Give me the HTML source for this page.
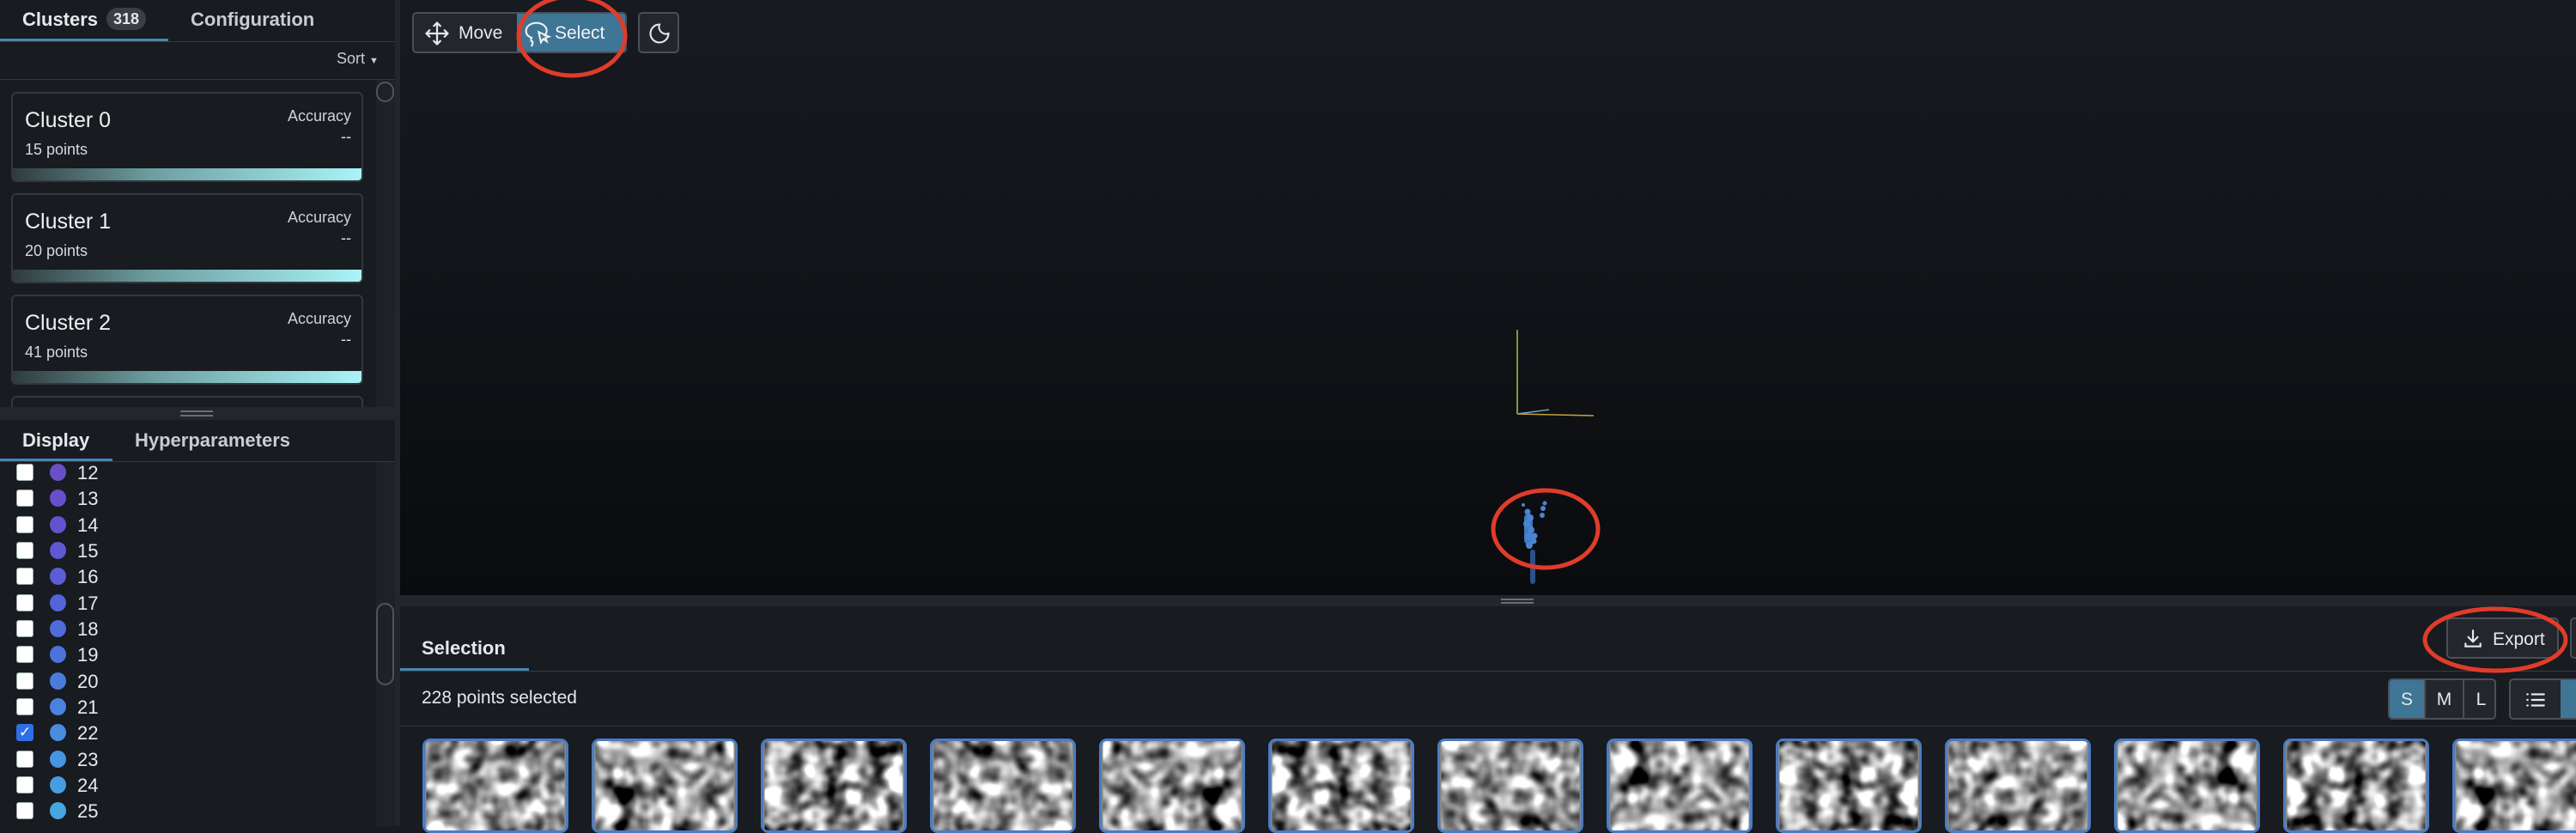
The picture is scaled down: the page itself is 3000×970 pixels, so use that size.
<!DOCTYPE html>
<html><head><meta charset="utf-8"><style>
*{box-sizing:border-box;margin:0;padding:0}
body{width:3000px;height:962px;overflow:hidden;background:#181b20;font-family:"Liberation Sans",sans-serif;color:#e6e8eb;position:relative}
.abs{position:absolute}
.left{left:0;top:0;width:462px;height:962px;background:#181b20}
.tab{position:absolute;font-weight:bold;font-size:22px}
.card{position:absolute;left:13px;width:410px;height:105px;border:2px solid #33373e;border-radius:6px;background:#181b20;overflow:hidden}
.card .t{position:absolute;left:14px;top:17px;font-size:25px;color:#eef0f2}
.card .p{position:absolute;left:14px;top:55px;font-size:18px;color:#d6d9dd}
.card .a{position:absolute;right:12px;top:16px;font-size:18px;color:#cfd3d8}
.card .d{position:absolute;right:12px;top:40px;font-size:18px;color:#dfe2e6}
.card .bar{position:absolute;left:0;right:0;bottom:0;height:14px;background:linear-gradient(90deg,#2f3b3e,#6d9ea0 40%,#a9f4f7)}
.row{position:absolute;left:19px;height:30px;width:200px}
.cb{position:absolute;left:0;top:0;width:20px;height:20px;background:#fff;border-radius:3px;border:1px solid #9aa}
.dot{position:absolute;left:39px;top:0;width:19px;height:20px;border-radius:50%}
.num{position:absolute;left:71px;top:-2px;font-size:22px;color:#e8eaed}
.thumb{position:absolute;top:860px;width:170px;height:110px;border:3px solid #4a7cc4;border-radius:9px;overflow:hidden;background:#888}
.btn{position:absolute;border:2px solid #4a4f58;border-radius:5px;background:#23262c}
</style></head><body>
<svg width="0" height="0" style="position:absolute">
<defs>
<filter id="f1" x="0" y="0" width="100%" height="100%" color-interpolation-filters="sRGB"><feTurbulence type="fractalNoise" baseFrequency="0.04" numOctaves="2" seed="1"/><feColorMatrix type="matrix" values="0.33 0.33 0.33 0 0 0.33 0.33 0.33 0 0 0.33 0.33 0.33 0 0 0 0 0 0 1"/><feComponentTransfer><feFuncR type="linear" slope="4" intercept="-1.4"/><feFuncG type="linear" slope="4" intercept="-1.4"/><feFuncB type="linear" slope="4" intercept="-1.4"/></feComponentTransfer></filter>
<filter id="f2" x="0" y="0" width="100%" height="100%" color-interpolation-filters="sRGB"><feTurbulence type="fractalNoise" baseFrequency="0.04" numOctaves="2" seed="7"/><feColorMatrix type="matrix" values="0.33 0.33 0.33 0 0 0.33 0.33 0.33 0 0 0.33 0.33 0.33 0 0 0 0 0 0 1"/><feComponentTransfer><feFuncR type="linear" slope="4" intercept="-1.4"/><feFuncG type="linear" slope="4" intercept="-1.4"/><feFuncB type="linear" slope="4" intercept="-1.4"/></feComponentTransfer></filter>
<filter id="f3" x="0" y="0" width="100%" height="100%" color-interpolation-filters="sRGB"><feTurbulence type="fractalNoise" baseFrequency="0.04" numOctaves="2" seed="13"/><feColorMatrix type="matrix" values="0.33 0.33 0.33 0 0 0.33 0.33 0.33 0 0 0.33 0.33 0.33 0 0 0 0 0 0 1"/><feComponentTransfer><feFuncR type="linear" slope="4" intercept="-1.4"/><feFuncG type="linear" slope="4" intercept="-1.4"/><feFuncB type="linear" slope="4" intercept="-1.4"/></feComponentTransfer></filter>
</defs></svg>

<!-- LEFT PANEL -->
<div class="abs left">
  <div class="tab" style="left:26px;top:10px">Clusters</div>
  <div class="abs" style="left:124px;top:9px;width:46px;height:26px;border-radius:13px;background:#3a3e45;font-size:18px;font-weight:bold;text-align:center;line-height:26px">318</div>
  <div class="tab" style="left:222px;top:10px;color:#c9ccd1">Configuration</div>
  <div class="abs" style="left:0;top:45px;width:196px;height:3px;background:#4a86b0"></div>
  <div class="abs" style="left:0;top:48px;width:460px;height:1px;background:#33373e"></div>
  <div class="abs" style="left:392px;top:58px;font-size:18px;color:#c9ccd1">Sort <span style="font-size:11px">▼</span></div>
  <div class="abs" style="left:0;top:92px;width:460px;height:1px;background:#33373e"></div>
  <div class="abs" style="left:438px;top:93px;width:22px;height:385px;background:#1e2126"></div>
  <div class="abs" style="left:438px;top:95px;width:21px;height:24px;border:2px solid #50555d;border-radius:11px"></div>

  <div class="card" style="top:107px"><div class="t">Cluster 0</div><div class="p">15 points</div><div class="a">Accuracy</div><div class="d">--</div><div class="bar"></div></div>
  <div class="card" style="top:225px"><div class="t">Cluster 1</div><div class="p">20 points</div><div class="a">Accuracy</div><div class="d">--</div><div class="bar"></div></div>
  <div class="card" style="top:343px"><div class="t">Cluster 2</div><div class="p">41 points</div><div class="a">Accuracy</div><div class="d">--</div><div class="bar"></div></div>
  <div class="card" style="top:461px;height:40px"></div>

  <div class="abs" style="left:0;top:474px;width:462px;height:16px;background:#23262c"></div>
  <div class="abs" style="left:210px;top:478px;width:38px;height:2px;background:#6a6f77"></div>
  <div class="abs" style="left:210px;top:483px;width:38px;height:2px;background:#6a6f77"></div>
  <div class="abs" style="left:0;top:489px;width:460px;height:48px;background:#181b20"></div>
  <div class="tab" style="left:26px;top:500px">Display</div>
  <div class="tab" style="left:157px;top:500px;color:#c9ccd1">Hyperparameters</div>
  <div class="abs" style="left:0;top:534px;width:131px;height:3px;background:#4a86b0"></div>
  <div class="abs" style="left:0;top:537px;width:460px;height:1px;background:#33373e"></div>
  <div class="abs" style="left:438px;top:538px;width:22px;height:424px;background:#1e2126"></div>
  <div class="abs" style="left:438px;top:702px;width:21px;height:96px;border:2px solid #50555d;border-radius:11px"></div>

  <div class="abs" style="left:0;top:538px;width:438px;height:424px;overflow:hidden">
    <div class="row" style="top:2px"><div class="cb"></div><div class="dot" style="background:#6a4fc8"></div><div class="num">12</div></div>
    <div class="row" style="top:32px"><div class="cb"></div><div class="dot" style="background:#6850cc"></div><div class="num">13</div></div>
    <div class="row" style="top:63px"><div class="cb"></div><div class="dot" style="background:#6353ce"></div><div class="num">14</div></div>
    <div class="row" style="top:93px"><div class="cb"></div><div class="dot" style="background:#5e58d2"></div><div class="num">15</div></div>
    <div class="row" style="top:123px"><div class="cb"></div><div class="dot" style="background:#5a5dd4"></div><div class="num">16</div></div>
    <div class="row" style="top:154px"><div class="cb"></div><div class="dot" style="background:#5563d8"></div><div class="num">17</div></div>
    <div class="row" style="top:184px"><div class="cb"></div><div class="dot" style="background:#506bda"></div><div class="num">18</div></div>
    <div class="row" style="top:214px"><div class="cb"></div><div class="dot" style="background:#4c72dc"></div><div class="num">19</div></div>
    <div class="row" style="top:245px"><div class="cb"></div><div class="dot" style="background:#4a7cde"></div><div class="num">20</div></div>
    <div class="row" style="top:275px"><div class="cb"></div><div class="dot" style="background:#4884de"></div><div class="num">21</div></div>
    <div class="row" style="top:305px"><div class="cb" style="background:#2f6fe6;border-color:#2f6fe6;color:#fff;font-size:17px;text-align:center;line-height:18px">✓</div><div class="dot" style="background:#488de0"></div><div class="num">22</div></div>
    <div class="row" style="top:336px"><div class="cb"></div><div class="dot" style="background:#4795e0"></div><div class="num">23</div></div>
    <div class="row" style="top:366px"><div class="cb"></div><div class="dot" style="background:#469ee0"></div><div class="num">24</div></div>
    <div class="row" style="top:396px"><div class="cb"></div><div class="dot" style="background:#45a6e0"></div><div class="num">25</div></div>
  </div>
</div>
<div class="abs" style="left:460px;top:0;width:6px;height:962px;background:#23262c"></div>

<!-- VIEWPORT -->
<div class="abs" style="left:466px;top:0;width:2534px;height:693px;background:linear-gradient(180deg,#171a20 0%,#111318 50%,#0a0b0e 100%)"></div>
<div class="btn" style="left:480px;top:14px;width:250px;height:48px;overflow:hidden">
  <div class="abs" style="left:120px;top:0;width:128px;height:46px;background:#3f7595"></div>
  <svg class="abs" style="left:12px;top:8px" width="30" height="30" viewBox="0 0 24 24" fill="none" stroke="#e6e8eb" stroke-width="1.8" stroke-linecap="round" stroke-linejoin="round"><path d="M12 2v20M2 12h20M9 5l3-3 3 3M9 19l3 3 3-3M5 9l-3 3 3 3M19 9l3 3-3 3"/></svg>
  <div class="abs" style="left:52px;top:11px;font-size:21px">Move</div>
  <svg class="abs" style="left:128px;top:8px" width="32" height="32" viewBox="0 0 24 24" fill="none" stroke="#eef0f2" stroke-width="1.6" stroke-linecap="round"><path d="M7 15c-3-1-5-3-5-6 0-4 4-7 9-7s9 3 9 7c0 2-1 3-2 4M7 15c-1 1-1 3 0 3s1 2 0 4M13 10l2 9 2-3 3 2-1-3 3-1z"/></svg>
  <div class="abs" style="left:164px;top:11px;font-size:21px;color:#f2f4f6">Select</div>
</div>
<div class="btn" style="left:743px;top:14px;width:48px;height:48px">
  <svg class="abs" style="left:9px;top:9px" width="28" height="28" viewBox="0 0 24 24" fill="none" stroke="#e6e8eb" stroke-width="1.8"><path d="M12 3a7 7 0 0 0 9 9 9 9 0 1 1-9-9z"/></svg>
</div>
<svg class="abs" style="left:0;top:0" width="3000" height="700">
  <ellipse cx="666" cy="42" rx="62" ry="46" fill="none" stroke="#e03c2a" stroke-width="5"/>
  <line x1="1767" y1="384" x2="1767" y2="482" stroke="#a9c24a" stroke-width="1.5"/>
  <line x1="1767" y1="482" x2="1856" y2="484" stroke="#c9a23a" stroke-width="1.5"/>
  <line x1="1767" y1="482" x2="1804" y2="477" stroke="#6aa6c0" stroke-width="1.5"/>
  <g fill="#4a86d0">
    <rect x="1775" y="598" width="10" height="36" rx="5" fill="#3f76c0"/>
    <circle cx="1779" cy="596" r="3.5"/><circle cx="1782" cy="603" r="4"/><circle cx="1778" cy="610" r="4"/><circle cx="1783" cy="617" r="4"/><circle cx="1780" cy="625" r="4"/><circle cx="1786" cy="630" r="3.5"/><circle cx="1781" cy="635" r="4"/><circle cx="1787" cy="624" r="3.5"/>
    <circle cx="1797" cy="592" r="3"/><circle cx="1799" cy="586" r="2.5"/><circle cx="1796" cy="600" r="3"/><circle cx="1774" cy="588" r="2"/>
    <rect x="1782" y="640" width="6" height="40" rx="3" fill="#2a528a"/>
  </g>
  <ellipse cx="1800" cy="616" rx="61" ry="45" fill="none" stroke="#e03c2a" stroke-width="5"/>
</svg>

<!-- SPLITTER + BOTTOM PANEL -->
<div class="abs" style="left:466px;top:693px;width:2534px;height:13px;background:#23262c"></div>
<div class="abs" style="left:1748px;top:697px;width:38px;height:2px;background:#6a6f77"></div>
<div class="abs" style="left:1748px;top:701px;width:38px;height:2px;background:#6a6f77"></div>
<div class="tab" style="left:491px;top:742px">Selection</div>
<div class="abs" style="left:466px;top:778px;width:150px;height:3px;background:#4a86b0"></div>
<div class="abs" style="left:466px;top:781px;width:2534px;height:1px;background:#3a3e45"></div>
<div class="abs" style="left:491px;top:801px;font-size:21px;color:#e6e8eb">228 points selected</div>
<div class="abs" style="left:466px;top:845px;width:2534px;height:1px;background:#33373e"></div>

<div class="btn" style="left:2849px;top:719px;width:131px;height:48px">
  <svg class="abs" style="left:16px;top:10px" width="26" height="26" viewBox="0 0 24 24" fill="none" stroke="#e6e8eb" stroke-width="2" stroke-linecap="round"><path d="M12 3v12M7 10l5 5 5-5M4 17v3h16v-3"/></svg>
  <div class="abs" style="left:52px;top:12px;font-size:21px">Export</div>
</div>
<div class="btn" style="left:2993px;top:719px;width:20px;height:48px"></div>
<svg class="abs" style="left:2800px;top:700px" width="200" height="90"><ellipse cx="106" cy="45" rx="82" ry="36" fill="none" stroke="#e03c2a" stroke-width="5"/></svg>

<div class="btn" style="left:2781px;top:790px;width:126px;height:48px;overflow:hidden;font-size:21px">
  <div class="abs" style="left:0;top:0;width:40px;height:46px;background:#3f7595;text-align:center;line-height:46px">S</div>
  <div class="abs" style="left:40px;top:0;width:45px;height:46px;border-left:2px solid #4a4f58;text-align:center;line-height:46px">M</div>
  <div class="abs" style="left:85px;top:0;width:41px;height:46px;border-left:2px solid #4a4f58;text-align:center;line-height:46px">L</div>
</div>
<div class="btn" style="left:2922px;top:790px;width:100px;height:48px;overflow:hidden">
  <svg class="abs" style="left:16px;top:10px" width="26" height="26" viewBox="0 0 24 24" fill="none" stroke="#e6e8eb" stroke-width="2" stroke-linecap="round"><path d="M8 6h13M8 12h13M8 18h13M3 6h.5M3 12h.5M3 18h.5"/></svg>
  <div class="abs" style="left:58px;top:0;width:50px;height:46px;background:#3f7595"></div>
</div>

<!-- THUMBNAILS -->
<svg class="thumb" style="left:492px" viewBox="0 0 170 110"><rect width="170" height="110" filter="url(#f1)"/></svg>
<svg class="thumb" style="left:689px" viewBox="0 0 170 110"><rect width="170" height="110" filter="url(#f2)"/></svg>
<svg class="thumb" style="left:886px" viewBox="0 0 170 110"><rect width="170" height="110" filter="url(#f3)"/></svg>
<svg class="thumb" style="left:1083px;transform:scaleX(-1)" viewBox="0 0 170 110"><rect width="170" height="110" filter="url(#f1)"/></svg>
<svg class="thumb" style="left:1280px;transform:scaleX(-1)" viewBox="0 0 170 110"><rect width="170" height="110" filter="url(#f2)"/></svg>
<svg class="thumb" style="left:1477px;transform:scaleX(-1)" viewBox="0 0 170 110"><rect width="170" height="110" filter="url(#f3)"/></svg>
<svg class="thumb" style="left:1674px;transform:scaleY(-1)" viewBox="0 0 170 110"><rect width="170" height="110" filter="url(#f1)"/></svg>
<svg class="thumb" style="left:1871px;transform:scaleY(-1)" viewBox="0 0 170 110"><rect width="170" height="110" filter="url(#f2)"/></svg>
<svg class="thumb" style="left:2068px;transform:scaleY(-1)" viewBox="0 0 170 110"><rect width="170" height="110" filter="url(#f3)"/></svg>
<svg class="thumb" style="left:2265px;transform:rotate(180deg)" viewBox="0 0 170 110"><rect width="170" height="110" filter="url(#f1)"/></svg>
<svg class="thumb" style="left:2462px;transform:rotate(180deg)" viewBox="0 0 170 110"><rect width="170" height="110" filter="url(#f2)"/></svg>
<svg class="thumb" style="left:2659px;transform:rotate(180deg)" viewBox="0 0 170 110"><rect width="170" height="110" filter="url(#f3)"/></svg>
<svg class="thumb" style="left:2856px" viewBox="0 0 170 110"><rect width="170" height="110" filter="url(#f2)"/></svg>
</body></html>
